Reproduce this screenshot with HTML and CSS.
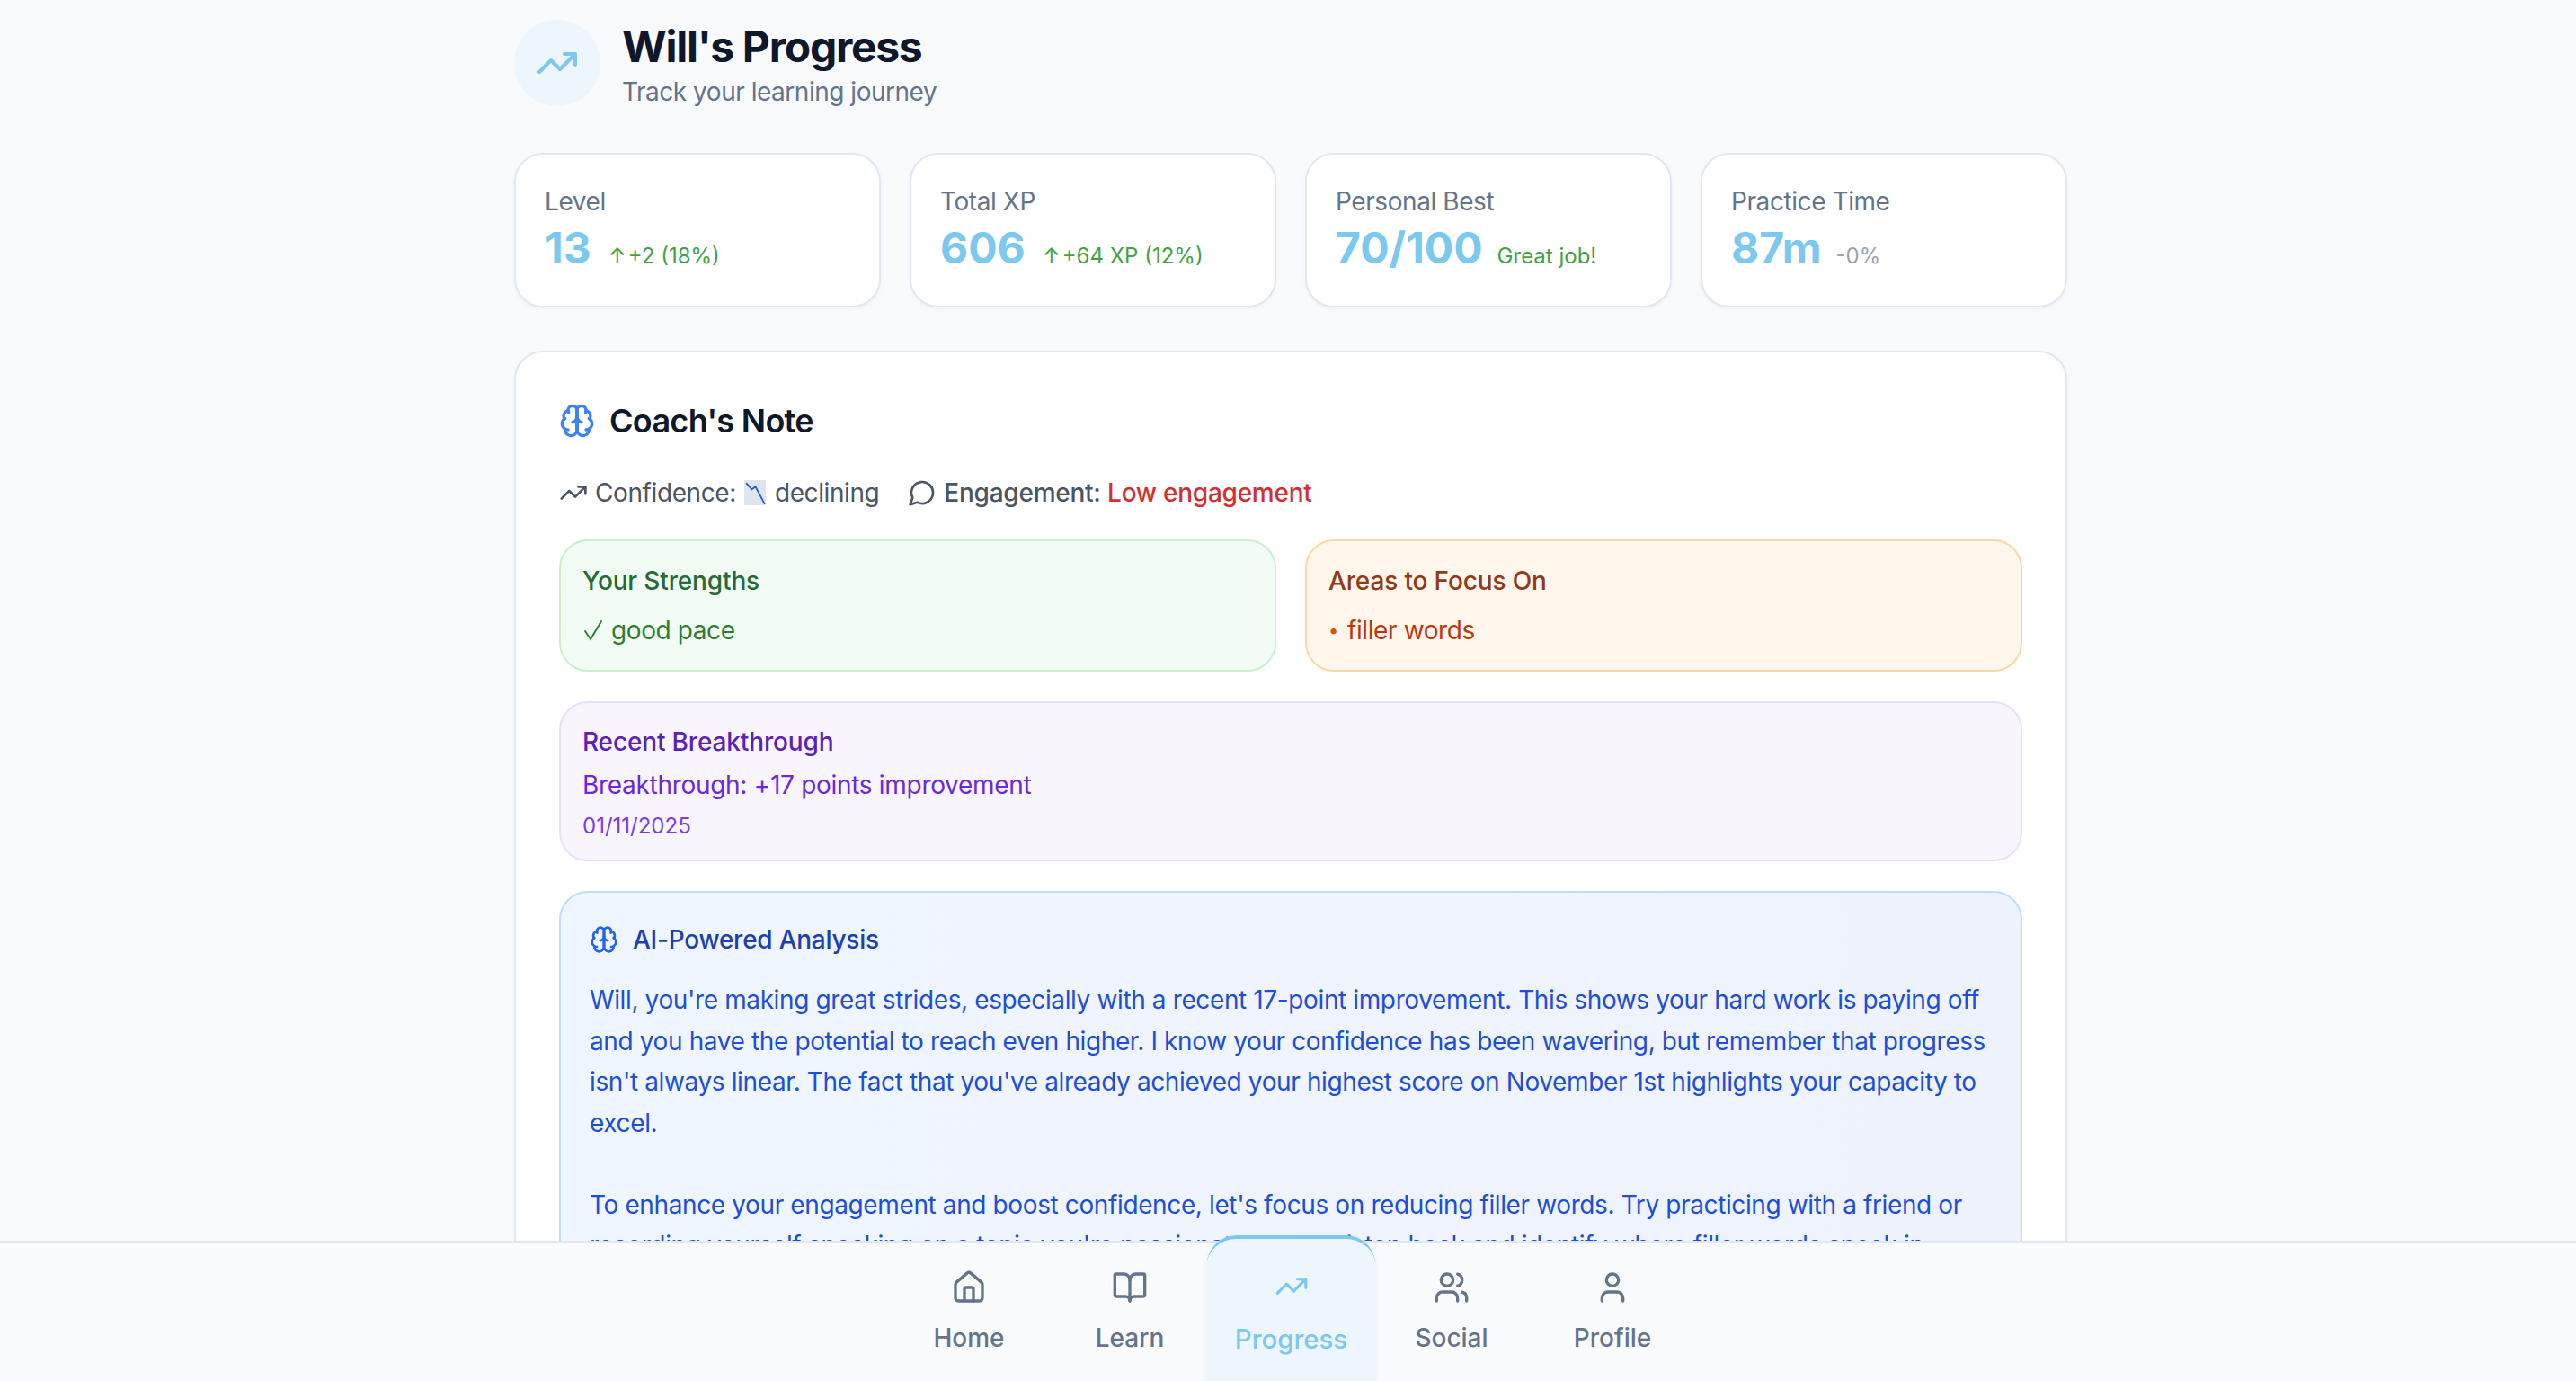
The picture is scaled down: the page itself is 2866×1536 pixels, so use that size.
FILE: index.html
```html
<!DOCTYPE html>
<html lang="en">
<head>
<meta charset="UTF-8">
<meta name="viewport" content="width=device-width, initial-scale=1.0">
<title>Will's Progress</title>
<link rel="stylesheet" href="styles.css">
</head>
<body>

<main class="page">
  <div class="content">

    <header class="page-head">
      <div class="head-icon">
        <svg class="icon icon-48" viewBox="0 0 24 24"><polyline points="22 7 13.5 15.5 8.5 10.5 2 17"/><polyline points="16 7 22 7 22 13"/></svg>
      </div>
      <div class="head-text">
        <h1>Will's Progress</h1>
        <p class="subtitle">Track your learning journey</p>
      </div>
    </header>

    <section class="stats">
      <div class="stat">
        <div class="stat-label">Level</div>
        <div class="stat-line">
          <span class="stat-value">13</span>
          <span class="stat-delta up"><span class="arrow">↑</span>+2 (18%)</span>
        </div>
      </div>
      <div class="stat">
        <div class="stat-label">Total XP</div>
        <div class="stat-line">
          <span class="stat-value">606</span>
          <span class="stat-delta up"><span class="arrow">↑</span>+64 XP (12%)</span>
        </div>
      </div>
      <div class="stat">
        <div class="stat-label">Personal Best</div>
        <div class="stat-line">
          <span class="stat-value">70/100</span>
          <span class="stat-delta up">Great job!</span>
        </div>
      </div>
      <div class="stat">
        <div class="stat-label">Practice Time</div>
        <div class="stat-line">
          <span class="stat-value">87m</span>
          <span class="stat-delta flat">-0%</span>
        </div>
      </div>
    </section>

    <section class="coach">
      <h2>
        <svg class="icon icon-40 brain-icon" viewBox="0 0 24 24"><path d="M12 5a3 3 0 1 0-5.997.125 4 4 0 0 0-2.526 5.77 4 4 0 0 0 .556 6.588A4 4 0 1 0 12 18Z"/><path d="M12 5a3 3 0 1 1 5.997.125 4 4 0 0 1 2.526 5.77 4 4 0 0 1-.556 6.588A4 4 0 1 1 12 18Z"/><path d="M15 13a4.5 4.5 0 0 1-3-4 4.5 4.5 0 0 1-3 4"/><path d="M12 18V5"/><path d="M17.599 6.5a3 3 0 0 0 .399-1.375"/><path d="M6.003 5.125A3 3 0 0 0 6.401 6.5"/><path d="M3.477 10.896a4 4 0 0 1 .585-.396"/><path d="M19.938 10.5a4 4 0 0 1 .585.396"/><path d="M6 18a4 4 0 0 1-1.967-.516"/><path d="M19.967 17.484A4 4 0 0 1 18 18"/></svg>
        Coach's Note
      </h2>

      <div class="meta">
        <span class="meta-item">
          <svg class="icon icon-32" viewBox="0 0 24 24"><polyline points="22 7 13.5 15.5 8.5 10.5 2 17"/><polyline points="16 7 22 7 22 13"/></svg>
          <span>Confidence: <svg class="chart-emoji" viewBox="0 0 23 27"><rect width="23" height="27" fill="#dfe5ec"/><path d="M2 3l6 7 4-3 10 19" fill="none" stroke="#1f55c4" stroke-width="1.6"/></svg> declining</span>
        </span>
        <span class="meta-item">
          <svg class="icon icon-32" viewBox="0 0 24 24"><path d="M7.9 20A9 9 0 1 0 4 16.1L2 22Z"/></svg>
          <span><span class="medium">Engagement:</span> <span class="low">Low engagement</span></span>
        </span>
      </div>

      <div class="two-up">
        <div class="box box-green">
          <h3>Your Strengths</h3>
          <div class="box-line"><svg class="check" viewBox="0 0 24 24"><path d="M3 13l6 9L21 2"/></svg>good pace</div>
        </div>
        <div class="box box-orange">
          <h3>Areas to Focus On</h3>
          <div class="box-line"><span class="dot">•</span>filler words</div>
        </div>
      </div>

      <div class="box box-purple">
        <h3>Recent Breakthrough</h3>
        <div class="purple-text">Breakthrough: +17 points improvement</div>
        <div class="purple-date">01/11/2025</div>
      </div>

      <div class="box box-blue">
        <h3>
          <svg class="icon icon-32" viewBox="0 0 24 24"><path d="M12 5a3 3 0 1 0-5.997.125 4 4 0 0 0-2.526 5.77 4 4 0 0 0 .556 6.588A4 4 0 1 0 12 18Z"/><path d="M12 5a3 3 0 1 1 5.997.125 4 4 0 0 1 2.526 5.77 4 4 0 0 1-.556 6.588A4 4 0 1 1 12 18Z"/><path d="M15 13a4.5 4.5 0 0 1-3-4 4.5 4.5 0 0 1-3 4"/><path d="M12 18V5"/><path d="M17.599 6.5a3 3 0 0 0 .399-1.375"/><path d="M6.003 5.125A3 3 0 0 0 6.401 6.5"/><path d="M3.477 10.896a4 4 0 0 1 .585-.396"/><path d="M19.938 10.5a4 4 0 0 1 .585.396"/><path d="M6 18a4 4 0 0 1-1.967-.516"/><path d="M19.967 17.484A4 4 0 0 1 18 18"/></svg>
          AI-Powered Analysis
        </h3>
        <p class="analysis">Will, you're making great strides, especially with a recent 17-point improvement. This shows your hard work is paying off and you have the potential to reach even higher. I know your confidence has been wavering, but remember that progress isn't always linear. The fact that you've already achieved your highest score on November 1st highlights your capacity to excel.

To enhance your engagement and boost confidence, let's focus on reducing filler words. Try practicing with a friend or recording yourself speaking on a topic you're passionate about. Listen back and identify where filler words sneak in.</p>
      </div>
    </section>

  </div>
</main>

<nav class="tabbar">
  <a class="tab">
    <svg class="icon icon-40" viewBox="0 0 24 24"><path d="M15 21v-8a1 1 0 0 0-1-1h-4a1 1 0 0 0-1 1v8"/><path d="M3 10a2 2 0 0 1 .709-1.528l7-5.999a2 2 0 0 1 2.582 0l7 5.999A2 2 0 0 1 21 10v9a2 2 0 0 1-2 2H5a2 2 0 0 1-2-2z"/></svg>
    <span>Home</span>
  </a>
  <a class="tab">
    <svg class="icon icon-40" viewBox="0 0 24 24"><path d="M12 7v14"/><path d="M3 18a1 1 0 0 1-1-1V4a1 1 0 0 1 1-1h5a4 4 0 0 1 4 4 4 4 0 0 1 4-4h5a1 1 0 0 1 1 1v13a1 1 0 0 1-1 1h-6a3 3 0 0 0-3 3 3 3 0 0 0-3-3z"/></svg>
    <span>Learn</span>
  </a>
  <a class="tab active">
    <svg class="icon icon-40" viewBox="0 0 24 24"><polyline points="22 7 13.5 15.5 8.5 10.5 2 17"/><polyline points="16 7 22 7 22 13"/></svg>
    <span>Progress</span>
  </a>
  <a class="tab">
    <svg class="icon icon-40" viewBox="0 0 24 24"><path d="M16 21v-2a4 4 0 0 0-4-4H6a4 4 0 0 0-4 4v2"/><circle cx="9" cy="7" r="4"/><path d="M22 21v-2a4 4 0 0 0-3-3.87"/><path d="M16 3.13a4 4 0 0 1 0 7.75"/></svg>
    <span>Social</span>
  </a>
  <a class="tab">
    <svg class="icon icon-40" viewBox="0 0 24 24"><path d="M19 21v-2a4 4 0 0 0-4-4H9a4 4 0 0 0-4 4v2"/><circle cx="12" cy="7" r="4"/></svg>
    <span>Profile</span>
  </a>
</nav>

</body>
</html>
```

FILE: styles.css
```css
* {
  box-sizing: border-box;
}
html, body {
  height: 100%;
}
body {
  margin: 0;
  display: flex;
  flex-direction: column;
  overflow: hidden;
  background: #f8fafc;
  color: #0f172a;
  font-family: Inter, "Noto Sans", sans-serif;
}
.icon {
  fill: none;
  stroke: currentColor;
  stroke-width: 2;
  stroke-linecap: round;
  stroke-linejoin: round;
  flex-shrink: 0;
}
.icon-32 { width: 32px; height: 32px; }
.icon-40 { width: 40px; height: 40px; }
.icon-48 { width: 48px; height: 48px; }

.page {
  flex: 1;
  min-height: 0;
  overflow: hidden;
  padding-left: 6px;
}
.content {
  width: 1728px;
  margin: 0 auto;
  padding-top: 22px;
}

/* header */
.page-head {
  display: flex;
  align-items: flex-start;
  gap: 24px;
  margin-bottom: 48px;
}
.head-icon {
  width: 96px;
  height: 96px;
  border-radius: 50%;
  background: #edf6fc;
  color: #7cc8ee;
  display: flex;
  align-items: center;
  justify-content: center;
}
h1 {
  margin: 0;
  font-size: 48px;
  line-height: 60px;
  font-weight: 700;
  letter-spacing: -1.3px;
}
.subtitle {
  margin: 0;
  font-size: 28px;
  line-height: 40px;
  letter-spacing: -0.48px;
  color: #64748b;
}

/* stat cards */
.stats {
  display: grid;
  grid-template-columns: repeat(4, 1fr);
  gap: 32px;
  margin-bottom: 48px;
}
.stat {
  background: #fff;
  border: 2px solid #e2e8f0;
  border-radius: 32px;
  padding: 32px;
  height: 172px;
  box-shadow: 0 2px 4px rgba(15, 23, 42, 0.04);
}
.stat-label {
  font-size: 28px;
  line-height: 40px;
  letter-spacing: -0.42px;
  color: #64748b;
}
.stat-line {
  display: flex;
  align-items: baseline;
  gap: 16px;
  padding-top: 2px;
}
.stat-value {
  font-size: 48px;
  line-height: 60px;
  font-weight: 700;
  color: #7cc8ee;
}
.stat-delta {
  font-size: 24px;
  line-height: 32px;
}
.arrow {
  margin: 0 2px 0 3px;
}
.stat-delta.up { color: #43a047; }
.stat-delta.flat { color: #9ca3af; }

/* coach's note */
.coach {
  background: #fff;
  border: 2px solid #e2e8f0;
  border-radius: 32px;
  padding: 48px;
  box-shadow: 0 2px 4px rgba(15, 23, 42, 0.04);
}
h2 {
  margin: 0 0 32px;
  display: flex;
  align-items: center;
  gap: 16px;
  font-size: 36px;
  line-height: 56px;
  font-weight: 600;
  letter-spacing: -0.7px;
}
.brain-icon {
  color: #3b82f6;
}
.meta {
  display: flex;
  gap: 32px;
  font-size: 28px;
  line-height: 40px;
  letter-spacing: -0.4px;
  color: #4b5563;
  margin-bottom: 32px;
}
.meta-item {
  display: flex;
  align-items: center;
  gap: 8px;
}
.chart-emoji {
  width: 24px;
  height: 28px;
  margin: 0 2px;
  vertical-align: -4px;
}
.medium {
  font-weight: 500;
  letter-spacing: -0.25px;
}
.low {
  color: #d32f2f;
  font-weight: 500;
  letter-spacing: -0.25px;
}
.two-up {
  display: grid;
  grid-template-columns: 1fr 1fr;
  gap: 32px;
  margin-bottom: 33px;
}
.box {
  border: 2px solid;
  border-radius: 32px;
  padding: 24px;
}
.box h3 {
  margin: 0;
  font-size: 28px;
  line-height: 40px;
  font-weight: 500;
  letter-spacing: -0.15px;
}
.box-line {
  margin-top: 15px;
  font-size: 28px;
  line-height: 40px;
  letter-spacing: -0.4px;
  display: flex;
  align-items: center;
  gap: 8px;
}
.check {
  width: 24px;
  height: 24px;
  fill: none;
  stroke: #2e7d32;
  stroke-width: 2;
  stroke-linecap: round;
}
.box-green {
  background: #f2fcf5;
  border-color: #c8f0d0;
}
.box-green h3 { color: #256b33; }
.box-green .box-line { color: #2e7d32; }
.box-orange {
  background: #fff6ec;
  border-color: #fad7a8;
}
.box-orange h3 { color: #923a18; }
.box-orange .box-line { color: #bf360c; }
.dot {
  color: #e65100;
  font-size: 20px;
  width: 12px;
  margin-right: 1px;
}
.box-purple {
  background: #f8f5fd;
  border-color: #e9defc;
  margin-bottom: 33px;
  padding-top: 23px;
  padding-bottom: 21px;
}
.box-purple h3 { color: #5b21b6; }
.purple-text {
  margin-top: 8px;
  font-size: 28px;
  line-height: 40px;
  letter-spacing: -0.3px;
  color: #6d28d9;
}
.purple-date {
  margin-top: 10px;
  font-size: 24px;
  line-height: 32px;
  color: #7c3aed;
}
.box-blue {
  background: linear-gradient(to right, #f0f6ff, #eef2fd);
  border-color: #bfdbfe;
  padding: 32px;
}
.box-blue h3 {
  display: flex;
  align-items: center;
  gap: 16px;
  color: #1e40af;
  letter-spacing: -0.25px;
  margin-bottom: 25px;
}
.box-blue h3 .icon {
  color: #2563eb;
}
.analysis {
  margin: 0;
  font-size: 28px;
  line-height: 45.5px;
  letter-spacing: -0.38px;
  color: #1d4ed8;
  white-space: pre-line;
}

/* bottom nav */
.tabbar {
  height: 156px;
  flex-shrink: 0;
  display: flex;
  justify-content: center;
  padding-left: 6px;
  background: #fafbfd;
  border-top: 2px solid #e2e8f0;
  position: relative;
}
.tab {
  width: 179px;
  height: 164px;
  border-radius: 32px 32px 0 0;
  padding-top: 30px;
  display: flex;
  flex-direction: column;
  align-items: center;
  gap: 16px;
  color: #64748b;
  font-size: 28px;
  line-height: 40px;
  font-weight: 500;
}
.tab.active {
  color: #7cc8ee;
  background: #edf6fc;
  border-top: 4px solid #7cc8ee;
  margin-top: -4px;
  transform: scale(1.05);
  box-shadow: 0 2px 6px rgba(15, 23, 42, 0.06);
}
.tab.active .icon {
  width: 36px;
  height: 36px;
  margin: 2px 0;
}
```
